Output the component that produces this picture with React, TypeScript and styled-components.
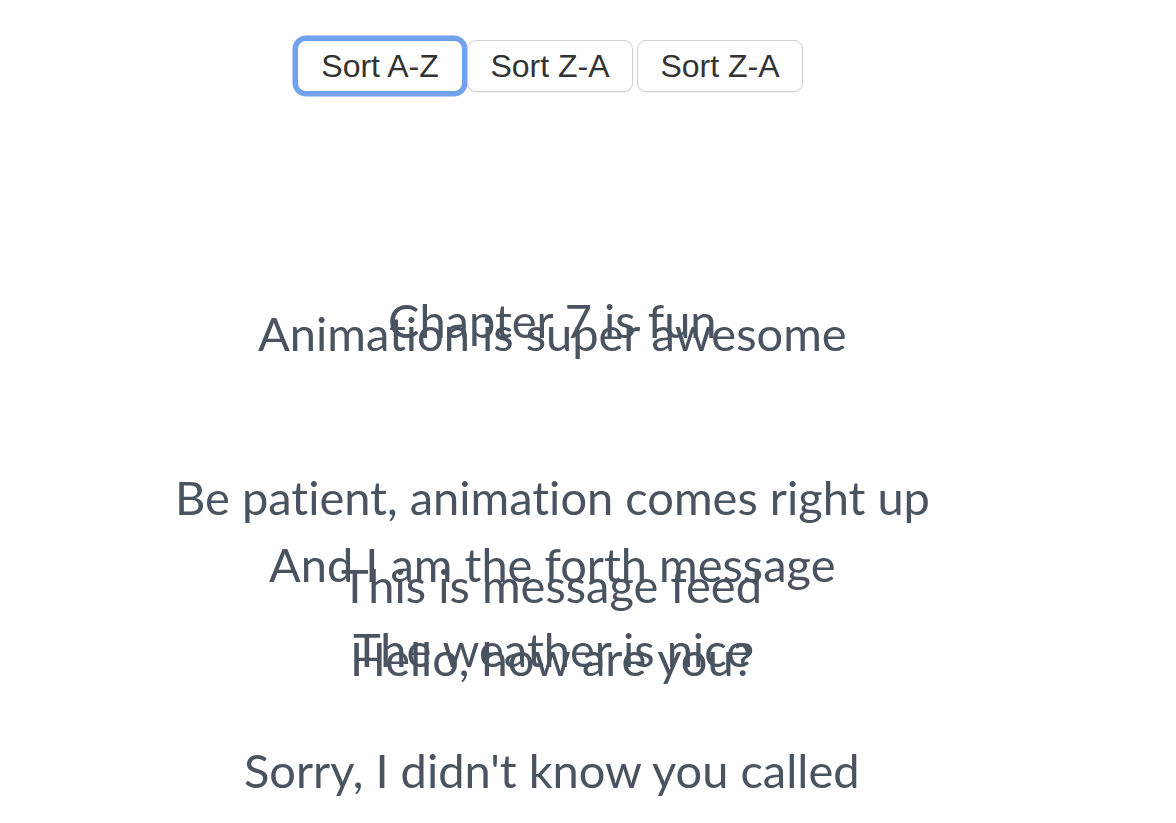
import React from "react";
import styled, { createGlobalStyle } from "styled-components";

const GlobalStyle = createGlobalStyle`
  html, body {
    margin: 0;
    padding: 0;
    background: #ffffff;
  }
  body {
    font-family: Lato, "Noto Sans", sans-serif;
  }
`;

const Page = styled.main`
  width: 1104px;
  height: 823px;
  overflow: hidden;
  display: flex;
  flex-direction: column;
  align-items: center;
`;

const ButtonBar = styled.div`
  margin-top: 40px;
  display: flex;
  gap: 4px;
  margin-right: 4px;
`;

const SortButton = styled.button<{ $focused?: boolean }>`
  box-sizing: border-box;
  width: 166px;
  height: 52px;
  padding: 0;
  background: #ffffff;
  border: 1.5px solid ${(p) => (p.$focused ? "#6d9eea" : "#d0d0d0")};
  border-radius: 9px;
  box-shadow: ${(p) =>
    p.$focused ? "0 0 0 4.5px #73a2ec" : "0 1px 1px rgba(0,0,0,0.06)"};
  font-family: "Liberation Sans", Arial, sans-serif;
  font-size: 32px;
  color: #333333;
  cursor: pointer;
`;

const MessageList = styled.ul`
  list-style: none;
  margin: 188px 0 0;
  padding: 0;
  display: flex;
  flex-direction: column;
  align-items: center;
`;

const MessageRow = styled.li`
  font-family: Lato, "Noto Sans", sans-serif;
  font-size: 47px;
  line-height: 64px;
  color: #4a5360;
  white-space: nowrap;
  font-variant-ligatures: none;
  font-feature-settings: "liga" 0, "clig" 0;
  will-change: transform;
`;

type Message = { text: string; offset: number };

// Frozen mid-animation state of a FLIP reorder: each row's transform offset.
const messages: Message[] = [
  { text: "Chapter 7 is fun", offset: 8 },
  { text: "Animation is super awesome", offset: -43 },
  { text: "Be patient, animation comes right up", offset: 57 },
  { text: "And I am the forth message", offset: 60 },
  { text: "This is message feed", offset: 17 },
  { text: "The weather is nice", offset: 17 },
  { text: "Hello, how are you?", offset: -38 },
  { text: "Sorry, I didn't know you called", offset: 10 },
];

export default function App() {
  return (
    <>
      <GlobalStyle />
      <Page>
        <ButtonBar>
          <SortButton $focused>Sort A-Z</SortButton>
          <SortButton>Sort Z-A</SortButton>
          <SortButton>Sort Z-A</SortButton>
        </ButtonBar>
        <MessageList>
          {messages.map((m) => (
            <MessageRow
              key={m.text}
              style={{ transform: `translateY(${m.offset}px)` }}
            >
              {m.text}
            </MessageRow>
          ))}
        </MessageList>
      </Page>
    </>
  );
}
